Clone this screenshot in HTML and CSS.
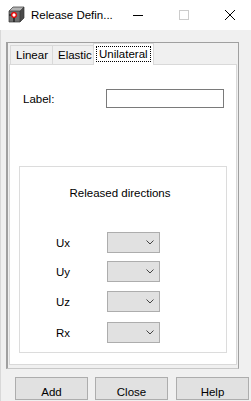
FILE: index.html
```html
<!DOCTYPE html>
<html>
<head>
<meta charset="utf-8">
<link rel="stylesheet" href="styles.css">
</head>
<body>
<div class="window">
  <div class="titlebar">
    <svg class="appicon" width="17" height="17" viewBox="0 0 17 17">
      <polygon points="1,5 5,1 16,1 12,5" fill="#b4b4b4"/>
      <polygon points="12,5 16,1 16,12 12,16" fill="#4a4a4a"/>
      <rect x="1" y="5" width="11" height="11" fill="#6e6e6e"/>
      <path d="M1 5 L5 1 L16 1 L16 12 L12 16 L1 16 Z M1 5 L12 5 L16 1 M12 5 L12 16" fill="none" stroke="#333" stroke-width="0.7"/>
      <line x1="1" y1="9" x2="4" y2="9" stroke="#111" stroke-width="1"/>
      <line x1="6" y1="11" x2="6" y2="16" stroke="#111" stroke-width="1.2"/>
      <circle cx="6" cy="9" r="2.3" fill="#fff" stroke="#e00" stroke-width="1.3"/>
    </svg>
    <span class="title">Release Defin...</span>
    <div class="caption-btns">
      <svg class="cbtn" width="46" height="30" viewBox="0 0 46 30"><line x1="18" y1="15.5" x2="28" y2="15.5" stroke="#000" stroke-width="1"/></svg>
      <svg class="cbtn" width="46" height="30" viewBox="0 0 46 30"><rect x="18.5" y="10.5" width="9" height="9" fill="none" stroke="#cccccc" stroke-width="1"/></svg>
      <svg class="cbtn" width="46" height="30" viewBox="0 0 46 30"><path d="M18 10 L28 20 M28 10 L18 20" stroke="#000" stroke-width="1"/></svg>
    </div>
  </div>

  <div class="frame">
    <div class="tabs">
      <div class="tab">Linear</div>
      <div class="tab">Elastic</div>
      <div class="tab active"><span class="focus">Unilateral</span></div>
    </div>
    <div class="page">
      <div class="label-row">
        <span class="lbl">Label:</span>
        <div class="textbox"></div>
      </div>
      <div class="group">
        <div class="group-title">Released directions</div>
        <div class="dir-row"><span class="dir">Ux</span><div class="combo"><svg width="8" height="5" viewBox="0 0 8 5"><path d="M0.5 0.5 L4 4 L7.5 0.5" fill="none" stroke="#444" stroke-width="1"/></svg></div></div>
        <div class="dir-row"><span class="dir">Uy</span><div class="combo"><svg width="8" height="5" viewBox="0 0 8 5"><path d="M0.5 0.5 L4 4 L7.5 0.5" fill="none" stroke="#444" stroke-width="1"/></svg></div></div>
        <div class="dir-row"><span class="dir">Uz</span><div class="combo"><svg width="8" height="5" viewBox="0 0 8 5"><path d="M0.5 0.5 L4 4 L7.5 0.5" fill="none" stroke="#444" stroke-width="1"/></svg></div></div>
        <div class="dir-row"><span class="dir">Rx</span><div class="combo"><svg width="8" height="5" viewBox="0 0 8 5"><path d="M0.5 0.5 L4 4 L7.5 0.5" fill="none" stroke="#444" stroke-width="1"/></svg></div></div>
      </div>
    </div>
  </div>

  <div class="buttons">
    <div class="btn">Add</div>
    <div class="btn">Close</div>
    <div class="btn">Help</div>
  </div>
</div>
</body>
</html>
```

FILE: styles.css
```css
html, body {
  margin: 0;
  padding: 0;
}
body {
  width: 251px;
  height: 401px;
  overflow: hidden;
  background: #f0f0f0;
  font-family: "Liberation Sans", Arial, sans-serif;
  font-size: 11.5px;
  color: #000;
}
.window {
  width: 251px;
  height: 401px;
  display: flex;
  flex-direction: column;
  border-left: 1px solid #d8d8d8;
  box-sizing: border-box;
}
.titlebar {
  height: 30px;
  background: #fff;
  display: flex;
  align-items: center;
  flex-shrink: 0;
  margin-left: -1px;
}
.appicon {
  margin-left: 8px;
  margin-right: 6px;
  margin-top: -1px;
}
.title {
  font-size: 11.5px;
  color: #000;
  white-space: nowrap;
}
.caption-btns {
  margin-left: auto;
  display: flex;
  margin-right: -2px;
}
.cbtn {
  display: block;
}
.frame {
  margin: 12px 12px 0 5px;
  height: 327px;
  box-sizing: border-box;
  border-left: 2px solid #a0a0a0;
  border-top: 1px solid #a0a0a0;
  border-right: 1px solid #a0a0a0;
  border-bottom: 1px solid #c8c8c8;
  display: flex;
  flex-direction: column;
  padding: 0 1px 3px 1px;
  flex-shrink: 0;
}
.tabs {
  height: 21px;
  display: flex;
  align-items: flex-end;
  padding-left: 1px;
  flex-shrink: 0;
}
.tab {
  height: 19px;
  box-sizing: border-box;
  border: 1px solid #d9d9d9;
  border-bottom: none;
  background: #f0f0f0;
  padding: 0 5px;
  display: flex;
  align-items: center;
  margin-right: -1px;
}
.tab:nth-child(1) { width: 43px; }
.tab:nth-child(2) { width: 42px; }
.tab.active {
  height: 22px;
  width: 61px;
  background: #fff;
  margin-bottom: -1px;
  position: relative;
  z-index: 1;
  padding: 0 2px;
  align-items: flex-start;
  padding-top: 2px;
}
.focus {
  border: 1px dotted #000;
  padding: 0 2px;
  height: 16px;
  line-height: 15px;
  width: 100%;
  box-sizing: border-box;
}
.page {
  flex: 1;
  background: #fff;
  border: 1px solid #d9d9d9;
  display: flex;
  flex-direction: column;
  padding: 0 9px 0 9px;
}
.label-row {
  display: flex;
  align-items: center;
  margin-top: 24px;
  height: 19px;
}
.lbl {
  margin-left: 4px;
  width: 83px;
}
.textbox {
  width: 118px;
  height: 19px;
  box-sizing: border-box;
  border: 1px solid #7a7a7a;
  background: #fff;
}
.group {
  margin-top: 58px;
  width: 208px;
  height: 187px;
  box-sizing: border-box;
  border: 1px solid #dcdcdc;
  display: flex;
  flex-direction: column;
}
.group-title {
  text-align: center;
  margin-top: 17px;
  height: 18px;
  line-height: 18px;
  margin-right: 6px;
}
.dir-row {
  display: flex;
  align-items: center;
  height: 21px;
  margin-bottom: 8px;
}
.group-title + .dir-row {
  margin-top: 30px;
}
.dir-row:nth-child(4) { margin-top: 1px; }
.dir-row:nth-child(5) { margin-top: 2px; }
.dir {
  margin-left: 36px;
  width: 51px;
}
.combo {
  width: 53px;
  height: 21px;
  box-sizing: border-box;
  border: 1px solid #adadad;
  background: #e1e1e1;
  display: flex;
  align-items: center;
  justify-content: flex-end;
  padding-right: 5px;
}
.combo svg { display: block; }
.buttons {
  display: flex;
  margin-top: 8px;
  padding-left: 14px;
  gap: 7px;
}
.btn {
  width: 73px;
  height: 23px;
  box-sizing: border-box;
  border: 1px solid #adadad;
  background: #e1e1e1;
  display: flex;
  align-items: center;
  justify-content: center;
  padding-top: 6px;
}
.btn:nth-child(3) { margin-left: 1px; }
```
